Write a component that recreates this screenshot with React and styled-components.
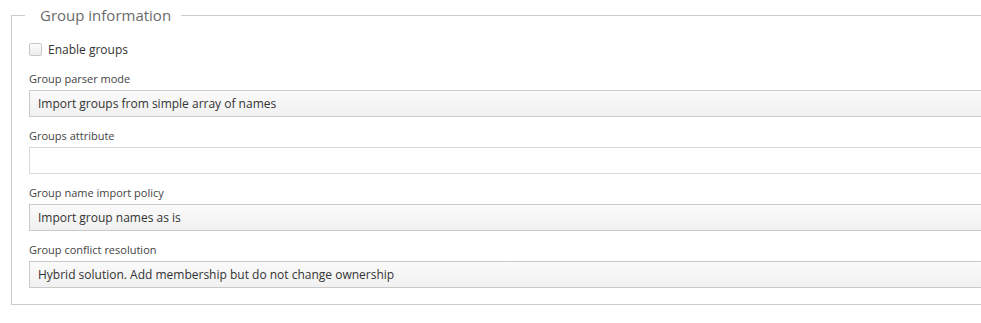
import React from 'react';
import styled, { createGlobalStyle } from 'styled-components';

const GlobalStyle = createGlobalStyle`
  html, body {
    margin: 0;
    padding: 0;
    background: #fff;
    overflow: hidden;
  }
  body {
    font-family: "Open Sans", "DejaVu Sans", sans-serif;
    color: #333;
  }
`;

const Page = styled.div`
  width: 981px;
  height: 323px;
  overflow: hidden;
  padding: 5px 0 0 11px;
  box-sizing: border-box;
`;

const Fieldset = styled.fieldset`
  width: 1100px;
  margin: 0;
  padding: 16px 17px 16px 17px;
  border: 1px solid #ccc;
  box-sizing: border-box;
`;

const Legend = styled.legend`
  margin-left: -4px;
  padding: 0 10px 0 15px;
  font-size: 15px;
  line-height: 20px;
  color: #6b6b6b;
`;

const CheckRow = styled.label`
  display: flex;
  align-items: center;
  gap: 6px;
  height: 16px;
  font-size: 12px;
  color: #333;
  margin-bottom: 15px;
`;

const Box = styled.span`
  width: 11px;
  height: 11px;
  border: 1px solid #c8c8c8;
  border-radius: 2px;
  background: linear-gradient(#fcfcfc, #ececec);
`;

const Field = styled.div`
  & + & {
    margin-top: 12px;
  }
`;

const Label = styled.div`
  font-size: 11px;
  line-height: 14px;
  color: #444;
  margin-bottom: 4px;
`;

const Control = styled.div`
  height: 27px;
  box-sizing: border-box;
  border: 1px solid ${p => (p.$input ? '#d9d9d9' : '#cacaca')};
  background: ${p => (p.$input ? '#fff' : 'linear-gradient(#fafafa, #f1f1f1)')};
  padding: 0 8px;
  display: flex;
  align-items: center;
  font-size: 12px;
  color: #333;
`;

const fields = [
  { label: 'Group parser mode', value: 'Import groups from simple array of names' },
  { label: 'Groups attribute', value: '', input: true },
  { label: 'Group name import policy', value: 'Import group names as is' },
  { label: 'Group conflict resolution', value: 'Hybrid solution. Add membership but do not change ownership' },
];

export default function App() {
  return (
    <>
      <GlobalStyle />
      <Page>
        <Fieldset>
          <Legend>Group information</Legend>
          <CheckRow>
            <Box />
            Enable groups
          </CheckRow>
          {fields.map(f => (
            <Field key={f.label}>
              <Label>{f.label}</Label>
              <Control $input={f.input}>{f.value}</Control>
            </Field>
          ))}
        </Fieldset>
      </Page>
    </>
  );
}
